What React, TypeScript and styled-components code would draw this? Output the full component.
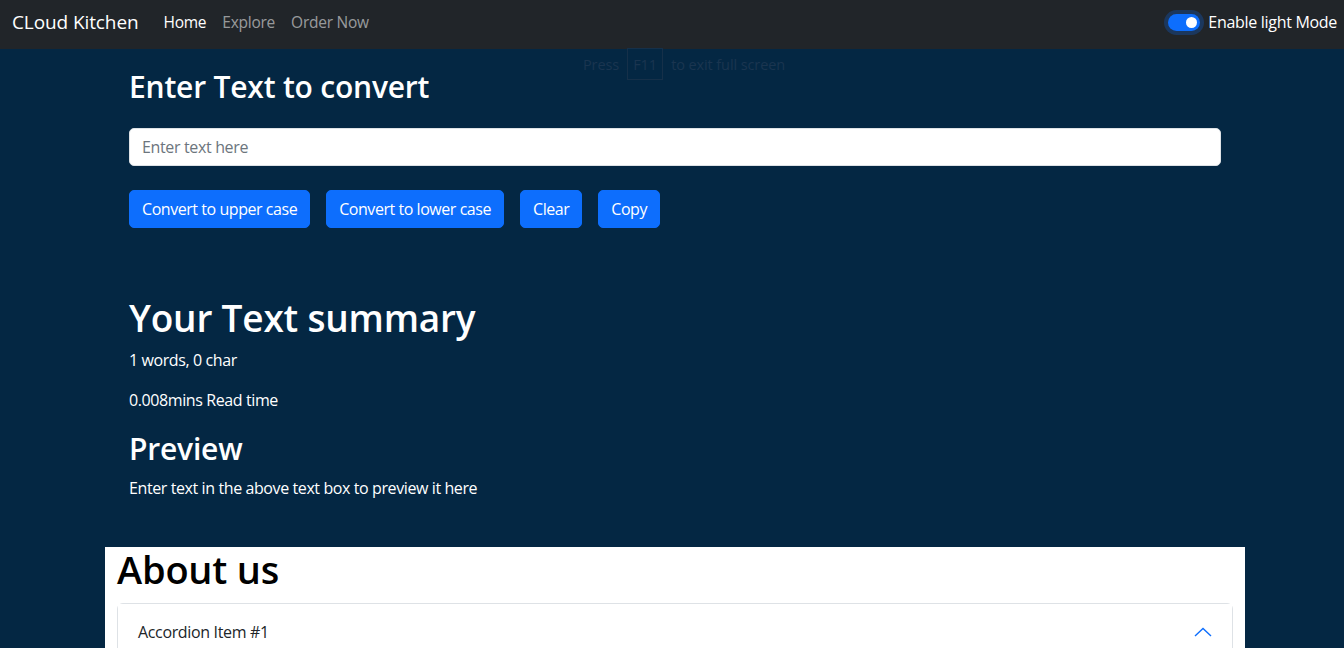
import React from "react";
import styled, { createGlobalStyle } from "styled-components";

const GlobalStyle = createGlobalStyle`
  html, body { margin: 0; padding: 0; }
  body {
    background: #042743;
    font-family: "Open Sans", "Noto Sans", sans-serif;
    color: #ffffff;
    overflow: hidden;
  }
  * { box-sizing: border-box; }
`;

const Nav = styled.nav`
  height: 49px;
  background: #212529;
  display: flex;
  align-items: center;
  padding: 0 7px 5px 12px;
`;

const Brand = styled.a`
  font-size: 19px;
  color: #fff;
  margin-right: 17px;
  letter-spacing: -0.1px;
`;

const NavList = styled.div`
  display: flex;
  align-items: center;
`;

const NavLink = styled.a<{ $active?: boolean }>`
  font-size: 15.5px;
  padding: 0 8px;
  color: ${(p) => (p.$active ? "#ffffff" : "rgba(255,255,255,0.55)")};
  letter-spacing: -0.25px;
`;

const SwitchWrap = styled.label`
  margin-left: auto;
  display: flex;
  align-items: center;
  gap: 8px;
  font-size: 16px;
  color: #fff;
  letter-spacing: -0.3px;
`;

const Track = styled.span`
  width: 32px;
  height: 17px;
  border-radius: 9px;
  background: #0d6efd;
  box-shadow: 0 0 0 4px rgba(13, 110, 253, 0.25);
  display: flex;
  align-items: center;
  justify-content: flex-end;
  padding-right: 3px;
`;

const Knob = styled.span`
  width: 11px;
  height: 11px;
  border-radius: 50%;
  background: #fff;
`;

const Page = styled.main`
  margin: 0 99px 0 105px;
`;

const FormSection = styled.section`
  padding: 0 24px;
`;

const Heading = styled.h1<{ $size: number; $dark?: boolean }>`
  font-size: ${(p) => p.$size}px;
  font-weight: 600;
  line-height: 1.2;
  margin: 0;
  color: ${(p) => (p.$dark ? "#000" : "#fff")};
  letter-spacing: -0.2px;
`;

const TitleRow = styled.div`
  padding-top: 20px;
  margin-bottom: 23px;
`;

const Input = styled.input`
  width: 100%;
  height: 38px;
  border: 1px solid #dee2e6;
  border-radius: 5px;
  padding: 0 12px;
  font-family: inherit;
  font-size: 16px;
  color: #212529;
  background: #fff;
  outline: none;
  letter-spacing: -0.35px;
  &::placeholder { color: #6c757d; }
`;

const ButtonRow = styled.div`
  display: flex;
  gap: 16px;
  margin-top: 24px;
`;

const Button = styled.button`
  height: 38px;
  padding: 0 12px;
  background: #0d6efd;
  color: #fff;
  border: 1px solid #0d6efd;
  border-radius: 5px;
  font-family: inherit;
  font-size: 16px;
  letter-spacing: -0.45px;
`;

const Summary = styled.section`
  padding: 68px 24px 0;
`;

const Para = styled.p`
  margin: 8px 0 0;
  font-size: 16px;
  line-height: 24px;
  letter-spacing: -0.4px;
  & + & { margin-top: 16px; }
`;

const PreviewHead = styled.div`
  margin-top: 19px;
  margin-bottom: 9px;
`;

const About = styled.section`
  margin-top: 47px;
  background: #fff;
  padding: 0 12px;
  min-height: 120px;
`;

const Accordion = styled.div`
  margin-top: 10px;
  border: 1px solid #dee2e6;
  border-radius: 6px;
`;

const AccordionHeader = styled.button`
  width: 100%;
  height: 56px;
  display: flex;
  align-items: center;
  justify-content: space-between;
  padding: 0 20px;
  background: #fff;
  border: none;
  font-family: inherit;
  font-size: 16px;
  color: #212529;
  letter-spacing: -0.35px;
`;

const Toast = styled.div`
  position: absolute;
  top: 48px;
  left: 583px;
  display: flex;
  align-items: center;
  gap: 8px;
  color: #1a3550;
  font-size: 14.5px;
  letter-spacing: -0.1px;
`;

const Key = styled.span`
  border: 1px solid #163049;
  height: 32px;
  width: 36px;
  display: flex;
  align-items: center;
  justify-content: center;
`;

export default function App() {
  return (
    <>
      <GlobalStyle />
      <Nav>
        <Brand>CLoud Kitchen</Brand>
        <NavList>
          <NavLink $active>Home</NavLink>
          <NavLink>Explore</NavLink>
          <NavLink>Order Now</NavLink>
        </NavList>
        <SwitchWrap>
          <Track>
            <Knob />
          </Track>
          Enable light Mode
        </SwitchWrap>
      </Nav>
      <Page>
        <FormSection>
          <TitleRow>
            <Heading $size={30}>Enter Text to convert</Heading>
          </TitleRow>
          <Input placeholder="Enter text here" />
          <ButtonRow>
            <Button>Convert to upper case</Button>
            <Button>Convert to lower case</Button>
            <Button>Clear</Button>
            <Button>Copy</Button>
          </ButtonRow>
        </FormSection>
        <Summary>
          <Heading $size={37}>Your Text summary</Heading>
          <Para>1 words, 0 char</Para>
          <Para>0.008mins Read time</Para>
          <PreviewHead>
            <Heading $size={30}>Preview</Heading>
          </PreviewHead>
          <Para>Enter text in the above text box to preview it here</Para>
        </Summary>
        <About>
          <Heading $size={38} $dark>About us</Heading>
          <Accordion>
            <AccordionHeader>
              Accordion Item #1
              <svg width="18" height="16" viewBox="0 0 18 16" fill="none">
                <path d="M1 12 L9 4.5 L17 12" stroke="#0d6efd" strokeWidth="1.4" />
              </svg>
            </AccordionHeader>
          </Accordion>
        </About>
      </Page>
      <Toast>
        Press <Key>F11</Key> to exit full screen
      </Toast>
    </>
  );
}
